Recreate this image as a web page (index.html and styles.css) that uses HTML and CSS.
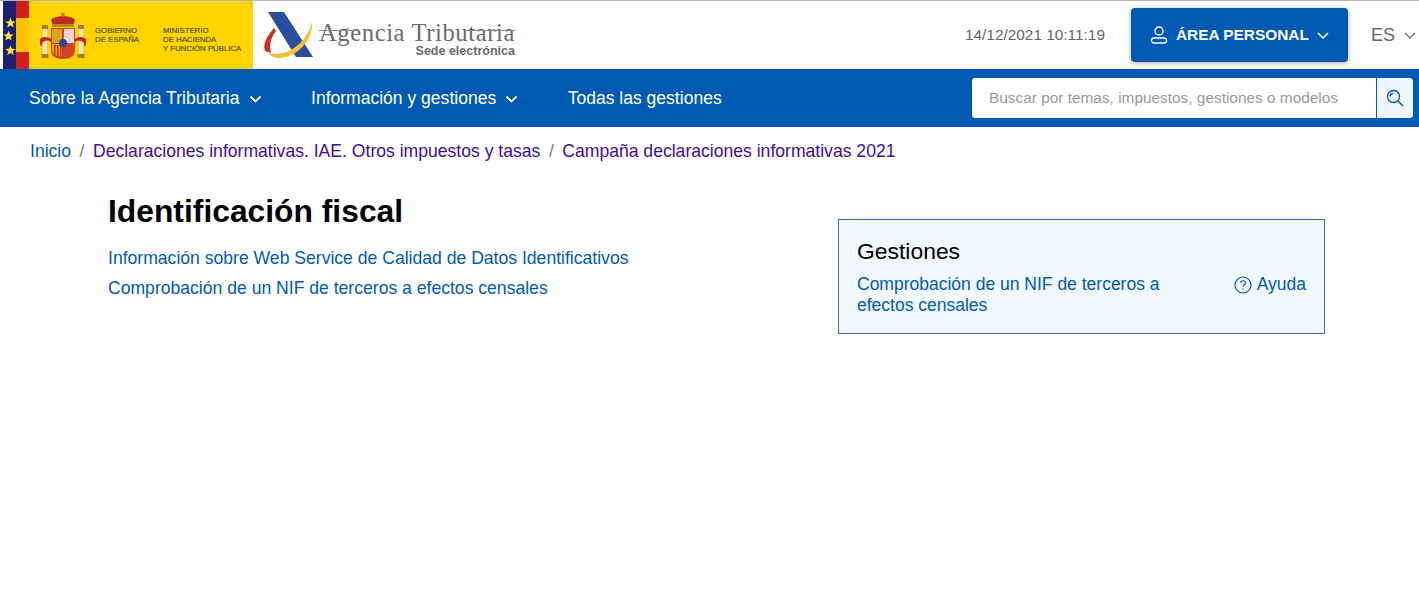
FILE: index.html
```html
<!DOCTYPE html>
<html lang="es">
<head>
  <meta charset="UTF-8">
  <meta name="viewport" content="width=device-width, initial-scale=1.0">
  <title>Identificación fiscal</title>
  <link rel="stylesheet" href="styles.css">
</head>
<body>
<header class="topbar">
  <div class="gov-logo">
    <div class="flag">
      <div class="flag-eu">
        <svg width="13" height="68" viewBox="0 0 13 68">
          <g fill="#ffe23a">
            <polygon points="7.500,16.500 8.900,20.300 12.800,20.400 9.700,22.800 10.800,26.600 7.500,24.400 4.200,26.600 5.300,22.800 2.200,20.400 6.100,20.300"/>
            <polygon points="5.500,29.500 6.900,33.300 10.800,33.400 7.700,35.800 8.800,39.600 5.500,37.400 2.200,39.600 3.300,35.800 0.200,33.400 4.100,33.300"/>
            <polygon points="7.500,44 8.900,47.800 12.800,47.900 9.700,50.300 10.800,54.100 7.500,51.900 4.200,54.100 5.300,50.300 2.200,47.900 6.100,47.800"/>
          </g>
        </svg>
      </div>
      <div class="flag-es"></div>
    </div>
    <svg class="arms" width="46" height="47" viewBox="0 0 46 47">
      <rect x="3" y="15" width="4" height="28" fill="#e8e3da"/>
      <rect x="2" y="13" width="6" height="4" fill="#a87a2c"/>
      <rect x="1.500" y="42" width="7" height="4" fill="#a87a2c"/>
      <rect x="39" y="15" width="4" height="28" fill="#e8e3da"/>
      <rect x="38" y="13" width="6" height="4" fill="#a87a2c"/>
      <rect x="37.500" y="42" width="7" height="4" fill="#a87a2c"/>
      <path d="M0 27c4-3 8-2 11 0v3c-3-2-6-2-9 1v3l-2-1zM46 27c-4-3-8-2-11 0v3c3-2 6-2 9 1v3l2-1z" fill="#cc1f1a"/>
      <path d="M11 8c3-5 21-5 24 0l-2 6H13z" fill="#c22a20"/>
      <path d="M12 12h22v3H12z" fill="#b58a2a"/>
      <path d="M21.500 1h3v3h-3z" fill="#a87a2c"/>
      <path d="M11 16h12v31c-7 0-12-3-12-9z" fill="#cc3a22"/>
      <path d="M23 16h12v22c0 6-5 9-12 9z" fill="#d2452a"/>
      <rect x="12" y="17" width="10" height="14" fill="#d9a520"/>
      <rect x="24" y="17" width="10" height="14" fill="#e8d6d8"/>
      <path d="M12 32h10v13c-6-1-10-3-10-7z" fill="#e2a81f"/>
      <path d="M14 33h1.500v11H14zM17 33h1.500v12H17zM20 33h1.500v12H20z" fill="#c8321f"/>
      <circle cx="23" cy="31" r="4" fill="#2a4a9a"/>
    </svg>
    <div class="gov-text gov-name">GOBIERNO<br>DE ESPAÑA</div>
    <div class="gov-text gov-ministry">MINISTERIO<br>DE HACIENDA<br>Y FUNCIÓN PÚBLICA</div>
  </div>
  <div class="aeat-logo">
    <svg width="52" height="46" viewBox="0 0 52 46">
      <polygon points="5,0 21,0 50,45 33,45" fill="#2b4f9e"/>
      <path d="M2 39C-1 31 6 22 11 16l2 3C8 25 6 32 8 41z" fill="#c8321f"/>
      <path d="M5 41c20 5 39-11 44-31 2 15-13 35-32 36-5 0-10-2-12-5z" fill="#f0c233"/>
    </svg>
    <div class="aeat-text">
      <div class="aeat-name">Agencia Tributaria</div>
      <div class="aeat-sub">Sede electrónica</div>
    </div>
  </div>
  <div class="date">14/12/2021 10:11:19</div>
  <button class="btn-personal">
    <svg width="18" height="18" viewBox="0 0 18 18" fill="none" stroke="#fff" stroke-width="1.300">
      <circle cx="9" cy="5" r="4"/>
      <rect x="1.500" y="12" width="15" height="5" rx="2.500"/>
    </svg>
    <span>ÁREA PERSONAL</span>
    <svg width="12" height="7" viewBox="0 0 12 7" fill="none" stroke="#fff" stroke-width="1.500"><path d="M1 1l5 5 5-5"/></svg>
  </button>
  <div class="lang">
    <span>ES</span>
    <svg width="12" height="7" viewBox="0 0 12 7" fill="none" stroke="#5f666d" stroke-width="1.200"><path d="M1 1l5 5 5-5"/></svg>
  </div>
</header>

<nav class="mainnav">
  <a class="nav-item">Sobre la Agencia Tributaria
    <svg width="13" height="8" viewBox="0 0 13 8" fill="none" stroke="#fff" stroke-width="1.800"><path d="M1.500 1.500l5 5 5-5"/></svg>
  </a>
  <a class="nav-item">Información y gestiones
    <svg width="13" height="8" viewBox="0 0 13 8" fill="none" stroke="#fff" stroke-width="1.800"><path d="M1.500 1.500l5 5 5-5"/></svg>
  </a>
  <a class="nav-item">Todas las gestiones</a>
  <form class="search">
    <input type="text" placeholder="Buscar por temas, impuestos, gestiones o modelos">
    <button type="button">
      <svg width="18" height="18" viewBox="0 0 18 18" fill="none" stroke="#005ab4" stroke-width="1.300">
        <circle cx="7.500" cy="7.500" r="6"/>
        <path d="M12 12l5 5M4 7.500a3.500 3.500 0 0 1 3-3.200" stroke-width="1.500"/>
      </svg>
    </button>
  </form>
</nav>

<div class="breadcrumb">
  <a class="home">Inicio</a><span class="sep">/</span><a>Declaraciones informativas. IAE. Otros impuestos y tasas</a><span class="sep">/</span><a>Campaña declaraciones informativas 2021</a>
</div>

<main class="content">
  <section class="main-col">
    <h1>Identificación fiscal</h1>
    <ul class="links">
      <li><a>Información sobre Web Service de Calidad de Datos Identificativos</a></li>
      <li><a>Comprobación de un NIF de terceros a efectos censales</a></li>
    </ul>
  </section>
  <aside class="card">
    <h2>Gestiones</h2>
    <div class="card-row">
      <a class="card-link">Comprobación de un NIF de terceros a efectos censales</a>
      <a class="help">
        <svg width="18" height="18" viewBox="0 0 18 18" fill="none" stroke="#005ab4" stroke-width="1.200">
          <circle cx="9" cy="9" r="8"/>
          <path d="M6.700 7c0-3 4.800-3 4.800-.1 0 1.800-2.500 1.800-2.500 3.800"/>
          <path d="M9 12.300v1.300"/>
        </svg>
        Ayuda
      </a>
    </div>
  </aside>
</main>
</body>
</html>
```

FILE: styles.css
```css
* {
  box-sizing: border-box;
}
body {
  margin: 0;
  font-family: "Liberation Sans", Arial, sans-serif;
  background: #fff;
  color: #000;
}
a {
  color: #005ab4;
  text-decoration: none;
}

/* cabecera */
.topbar {
  display: flex;
  align-items: center;
  height: 69px;
  padding-left: 3px;
  border-top: 1px solid #b5b5b5;
}
.gov-logo {
  display: flex;
  align-items: center;
  width: 250px;
  height: 68px;
  background: #ffd400;
}
.flag {
  display: flex;
  width: 26px;
  height: 68px;
}
.flag-eu {
  width: 13px;
  background: #1a2270;
}
.flag-es {
  width: 13px;
  background: linear-gradient(#cf1f17 0 17px, #ffc400 17px 51px, #cf1f17 51px);
}
.arms {
  margin-left: 11px;
}
.gov-text {
  font-size: 7.800px;
  line-height: 9px;
  color: #57522a;
  -webkit-text-stroke: 0.200px #57522a;
}
.gov-name {
  width: 68px;
  margin-left: 9px;
}
.gov-ministry {
  margin-top: 8px;
  white-space: nowrap;
}
.aeat-logo {
  display: flex;
  align-items: center;
  margin-left: 10px;
}
.aeat-text {
  margin: 8px 0 0 4px;
  text-align: right;
  color: #6b6b6b;
}
.aeat-name {
  position: relative;
  font-family: "Liberation Serif", serif;
  font-size: 24.600px;
  line-height: 24px;
  letter-spacing: 0.600px;
  white-space: nowrap;
}
/* las rayas del logotipo */
.aeat-name::before,
.aeat-name::after {
  content: "";
  position: absolute;
  top: 9px;
  height: 1px;
  background: #8a8a8a;
}
.aeat-name::before {
  left: 0;
  width: 38px;
}
.aeat-name::after {
  right: 0;
  width: 50px;
}
.aeat-sub {
  font-size: 12.500px;
  line-height: 13px;
  font-weight: bold;
}
.date {
  margin-left: auto;
  font-size: 15.400px;
  color: #5f666d;
}
.btn-personal {
  display: flex;
  align-items: center;
  gap: 8px;
  width: 217px;
  height: 54px;
  margin: 0 23px 0 26px;
  padding: 0 0 0 19px;
  border: none;
  border-radius: 4px;
  background: #005ab4;
  color: #fff;
  font-family: inherit;
  font-size: 15.400px;
  font-weight: bold;
  box-shadow: 0 1px 4px rgba(0,0,0,0.35);
}
.lang {
  display: flex;
  align-items: center;
  gap: 9px;
  width: 48px;
  font-size: 18px;
  color: #5f666d;
}

/* menu azul */
.mainnav {
  display: flex;
  align-items: center;
  height: 58px;
  padding: 0 6px 0 29px;
  background: #005ab4;
}
.nav-item {
  display: flex;
  align-items: center;
  gap: 9px;
  margin: 1px 49.500px 0 0;
  color: #fff;
  font-size: 17.550px;
}
.search {
  display: flex;
  width: 441px;
  height: 40px;
  margin-left: auto;
  border-radius: 4px;
  overflow: hidden;
  background: #fff;
}
.search input {
  flex: 1;
  min-width: 0;
  padding: 0 0 0 17px;
  border: none;
  font-family: inherit;
  font-size: 15.400px;
}
.search input::placeholder {
  color: #9a9a9a;
  opacity: 1;
}
.search button {
  display: flex;
  align-items: center;
  justify-content: center;
  width: 37px;
  padding: 0;
  border: none;
  border-left: 1px solid #005ab4;
  background: #f0f6fd;
}

.breadcrumb {
  padding: 14px 0 0 30px;
  font-size: 17.580px;
  line-height: 20px;
}
.breadcrumb a {
  color: #3c0f9a;
}
.breadcrumb a.home {
  color: #005ab4;
}
.sep {
  margin: 0 8.500px;
  color: #7a7a7a;
}

/* contenido */
.content {
  display: flex;
  align-items: flex-start;
  padding: 0 94px 0 108px;
}
.main-col {
  flex: 1;
  padding-top: 30px;
}
h1 {
  margin: 0;
  font-size: 31.800px;
  line-height: 40px;
  font-weight: bold;
}
.links {
  list-style: none;
  margin: 17px 0 0;
  padding: 0;
  font-size: 17.580px;
  line-height: 20px;
}
.links li {
  margin-bottom: 10px;
}
.card {
  width: 487px;
  height: 115px;
  margin-top: 58px;
  padding: 19px 18px 0;
  border: 1px solid #2f72bd;
  background: #f1f8fe;
}
h2 {
  margin: 0;
  font-size: 22.900px;
  line-height: 25px;
  font-weight: normal;
}
.card-row {
  display: flex;
  justify-content: space-between;
  margin-top: 10px;
  font-size: 17.500px;
  line-height: 21px;
}
.card-link {
  width: 330px;
}
.help {
  display: flex;
  align-items: center;
  gap: 5px;
  align-self: flex-start;
}
```
